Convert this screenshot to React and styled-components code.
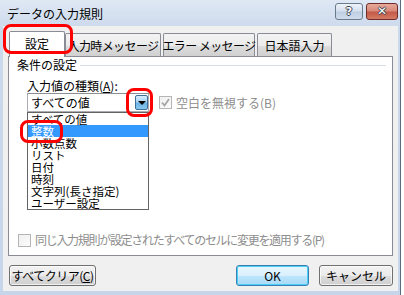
import React from 'react';
import styled, { createGlobalStyle } from 'styled-components';

const GlobalStyle = createGlobalStyle`
  html, body {
    margin: 0;
    padding: 0;
    background: #ffffff;
  }
  body {
    font-family: "Noto Sans CJK JP", "Liberation Sans", sans-serif;
    font-size: 12px;
    color: #000;
  }
`;

const Window = styled.div`
  position: relative;
  width: 401px;
  height: 295px;
  box-sizing: border-box;
  border-right: 1px solid #5a6b82;
  background: linear-gradient(#dfe8f4, #cbd9ec 30px, #c6d5ea);
  display: flex;
  flex-direction: column;
  overflow: hidden;
`;

const TitleBar = styled.div`
  height: 26px;
  display: flex;
  align-items: center;
  padding: 0 2px 0 7px;
  box-sizing: border-box;
`;

const Title = styled.div`
  flex: 1;
  font-size: 12px;
  line-height: 14px;
  margin-top: 1px;
`;

const CaptionButton = styled.div`
  width: ${p => p.$w}px;
  height: 17px;
  box-sizing: border-box;
  margin-left: ${p => p.$gap || 0}px;
  margin-top: -4px;
  border: 1px solid ${p => (p.$close ? '#6e2d2a' : '#6b7b8e')};
  border-radius: 3px;
  background: ${p =>
    p.$close
      ? 'linear-gradient(#e9a99b, #d98a7a 45%, #c55a4a 55%, #d47a62)'
      : 'linear-gradient(#eef3f9, #d5e0ee 45%, #bfcfe3 55%, #cfdcec)'};
  display: flex;
  align-items: center;
  justify-content: center;
  color: #fff;
  font-family: "DejaVu Sans", sans-serif;
  font-weight: bold;
  font-size: ${p => (p.$close ? 12 : 11)}px;
  line-height: 1;
  text-shadow: -1px 0 #3a4352, 1px 0 #3a4352, 0 -1px #3a4352, 0 1px #3a4352;
`;

const Client = styled.div`
  margin: 0 2px 0 3px;
  height: 265px;
  box-sizing: border-box;
  background: #f0f0f0;
  padding: 5px 5px 5px 5px;
  display: flex;
  flex-direction: column;
`;

const TabRow = styled.div`
  display: flex;
  align-items: flex-end;
  height: 26px;
  padding-left: 1px;
`;

const Tab = styled.div`
  width: ${p => p.$w}px;
  height: ${p => (p.$active ? 26 : 24)}px;
  margin-left: ${p => p.$gap || 0}px;
  box-sizing: border-box;
  border: 1px solid #898c95;
  border-bottom: none;
  border-radius: 2px 2px 0 0;
  background: ${p => (p.$active ? '#ffffff' : 'linear-gradient(#f3f3f3, #ebebeb 50%, #dddddd 51%, #cfcfcf)')};
  position: ${p => (p.$active ? 'relative' : 'static')};
  z-index: ${p => (p.$active ? 2 : 'auto')};
  display: flex;
  align-items: center;
  justify-content: center;
  white-space: nowrap;
  font-size: 12px;
  letter-spacing: ${p => p.$ls || 0}px;
  line-height: 14px;
  padding-bottom: ${p => (p.$active ? 2 : 0)}px;
`;

const Panel = styled.div`
  position: relative;
  z-index: 1;
  margin-top: -1px;
  height: 200px;
  box-sizing: border-box;
  border: 1px solid #898c95;
  background: #ffffff;
  display: flex;
  flex-direction: column;
  padding: 0 6px 8px 8px;
`;

const GroupHeader = styled.div`
  display: flex;
  align-items: center;
  height: 14px;
  margin-top: 1px;
  line-height: 14px;
`;

const GroupLine = styled.div`
  flex: 1;
  height: 1px;
  background: #d5dfe5;
  margin-left: 3px;
  margin-top: 1px;
`;

const Section = styled.div`
  padding-left: 10px;
  margin-top: 7px;
`;

const FieldLabel = styled.div`
  line-height: 14px;
  height: 14px;
`;

const Underline = styled.span`
  text-decoration: underline;
`;

const FieldRow = styled.div`
  display: flex;
  align-items: center;
  margin-top: 0;
  gap: 10px;
`;

const ComboWrap = styled.div`
  position: relative;
  width: 122px;
  height: 19px;
`;

const Combo = styled.div`
  width: 100%;
  height: 100%;
  box-sizing: border-box;
  border: 1px solid #abadb3;
  border-top-color: #8c8f96;
  background: #fff;
  display: flex;
  align-items: center;
  padding-left: 3px;
  line-height: 14px;
`;

const ComboText = styled.div`
  flex: 1;
`;

const DropButton = styled.div`
  width: 13px;
  height: 15px;
  box-sizing: border-box;
  border: 1px solid #3c6f97;
  border-radius: 2px;
  background: linear-gradient(#d9edfb, #a9d4f3 45%, #6cb2e4 55%, #8ac6ee);
  display: flex;
  align-items: center;
  justify-content: center;
`;

const Arrow = styled.div`
  width: 0;
  height: 0;
  border-left: 4px solid transparent;
  border-right: 4px solid transparent;
  border-top: 4px solid #000;
  margin-top: 1px;
`;

const DropList = styled.div`
  position: absolute;
  top: 100%;
  left: 0;
  width: 122px;
  box-sizing: border-box;
  border: 1px solid #646464;
  background: #fff;
  z-index: 3;
`;

const ListItem = styled.div`
  height: 12px;
  line-height: 12px;
  font-size: 11.5px;
  padding-left: 3px;
  white-space: nowrap;
  background: ${p => (p.$selected ? '#3399ff' : 'transparent')};
  color: ${p => (p.$selected ? '#fff' : '#000')};
`;

const CheckRow = styled.label`
  display: flex;
  align-items: center;
  gap: 4px;
  color: #8d8d8d;
  line-height: 14px;
  white-space: nowrap;
  letter-spacing: ${p => p.$ls || 0}px;
`;

const CheckBox = styled.div`
  width: 13px;
  height: 13px;
  box-sizing: border-box;
  border: 1px solid #b5b5b5;
  background: linear-gradient(135deg, #f0f0f0, #fbfbfb);
  display: flex;
  align-items: center;
  justify-content: center;
  flex: none;
`;

const BottomCheck = styled.div`
  margin-top: auto;
  padding-left: 1px;
`;

const ButtonRow = styled.div`
  display: flex;
  align-items: center;
  margin-top: 9px;
  padding-left: 1px;
`;

const Button = styled.div`
  width: ${p => p.$w}px;
  height: 21px;
  box-sizing: border-box;
  margin-left: ${p => p.$gap || 0}px;
  border: 1px solid ${p => (p.$focus ? '#3c7fb1' : '#707070')};
  border-radius: 3px;
  background: ${p =>
    p.$focus
      ? 'linear-gradient(#eaf6fd, #d9f0fc 50%, #bee6fd 51%, #a7d9f5)'
      : 'linear-gradient(#f2f2f2, #ebebeb 50%, #dddddd 51%, #cfcfcf)'};
  box-shadow: inset 0 0 0 1px ${p => (p.$focus ? '#48d0f8' : 'rgba(255,255,255,0.7)')};
  display: flex;
  align-items: center;
  justify-content: center;
  line-height: 14px;
  white-space: nowrap;
  letter-spacing: ${p => p.$ls || 0}px;
`;

const Spacer = styled.div`
  flex: 1;
`;

const Mark = styled.div`
  position: absolute;
  left: ${p => p.$x}px;
  top: ${p => p.$y}px;
  width: ${p => p.$w}px;
  height: ${p => p.$h}px;
  box-sizing: border-box;
  border: 3px solid #ff0000;
  border-radius: ${p => p.$r || 8}px;
  z-index: 10;
  pointer-events: none;
`;

const CheckIcon = () => (
  <svg width="11" height="11" viewBox="0 0 11 11">
    <path d="M2 5.5 L4.5 8.5 L9 2" fill="none" stroke="#a6a6a6" strokeWidth="1.8" />
  </svg>
);

const items = ['すべての値', '整数', '小数点数', 'リスト', '日付', '時刻', '文字列(長さ指定)', 'ユーザー設定'];

export default function App() {
  return (
    <>
      <GlobalStyle />
      <Window>
        <TitleBar>
          <Title>データの入力規則</Title>
          <CaptionButton $w={28}>?</CaptionButton>
          <CaptionButton $w={32} $gap={3} $close>✕</CaptionButton>
        </TitleBar>
        <Client>
          <TabRow>
            <Tab $active $w={56}>設定</Tab>
            <Tab $w={96} $ls={-0.6}>入力時メッセージ</Tab>
            <Tab $w={92} $gap={2} $ls={-0.6}>エラー メッセージ</Tab>
            <Tab $w={75} $gap={2}>日本語入力</Tab>
          </TabRow>
          <Panel>
            <GroupHeader>
              条件の設定
              <GroupLine />
            </GroupHeader>
            <Section>
              <FieldLabel>
                入力値の種類(<Underline>A</Underline>):
              </FieldLabel>
              <FieldRow>
                <ComboWrap>
                  <Combo>
                    <ComboText>すべての値</ComboText>
                    <DropButton>
                      <Arrow />
                    </DropButton>
                  </Combo>
                  <DropList>
                    {items.map((it, i) => (
                      <ListItem key={it} $selected={i === 1}>
                        {it}
                      </ListItem>
                    ))}
                  </DropList>
                </ComboWrap>
                <CheckRow>
                  <CheckBox>
                    <CheckIcon />
                  </CheckBox>
                  空白を無視する(B)
                </CheckRow>
              </FieldRow>
            </Section>
            <BottomCheck>
              <CheckRow $ls={-1.3}>
                <CheckBox />
                同じ入力規則が設定されたすべてのセルに変更を適用する(P)
              </CheckRow>
            </BottomCheck>
          </Panel>
          <ButtonRow>
            <Button $w={87} $ls={-0.5}>
              すべてクリア(<Underline>C</Underline>)
            </Button>
            <Spacer />
            <Button $w={73} $focus>OK</Button>
            <Button $w={74} $gap={10}>キャンセル</Button>
          </ButtonRow>
        </Client>
        <Mark $x={3} $y={24} $w={70} $h={30} />
        <Mark $x={126} $y={88} $w={27} $h={29} />
        <Mark $x={20} $y={120} $w={43} $h={23} />
      </Window>
    </>
  );
}
